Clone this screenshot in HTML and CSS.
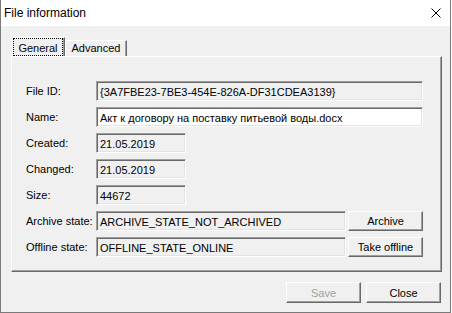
FILE: index.html
```html
<!DOCTYPE html>
<html lang="en">
<head>
    <meta charset="UTF-8">
    <title>File information</title>
    <link rel="stylesheet" href="styles.css">
</head>
<body>
    <div class="window">
        <div class="titlebar">
            <span class="title">File information</span>
            <svg class="close-icon" width="10" height="10" viewBox="0 0 10 10">
                <path d="M0.5 0.5 L9.5 9.5 M9.5 0.5 L0.5 9.5" stroke="#000" stroke-width="1" fill="none"/>
            </svg>
        </div>
        <div class="client">
            <div class="tabs">
                <div class="tab active"><span class="focus">General</span></div>
                <div class="tab">Advanced</div>
            </div>
            <div class="panel">
                <div class="form">
                    <label>File ID:</label>
                    <div class="field wide">{3A7FBE23-7BE3-454E-826A-DF31CDEA3139}</div>

                    <label>Name:</label>
                    <div class="field wide editable">Акт к договору на поставку питьевой воды.docx</div>

                    <label>Created:</label>
                    <div class="field short">21.05.2019</div>

                    <label>Changed:</label>
                    <div class="field short">21.05.2019</div>

                    <label>Size:</label>
                    <div class="field short">44672</div>

                    <label>Archive state:</label>
                    <div class="field-row">
                        <div class="field state">ARCHIVE_STATE_NOT_ARCHIVED</div>
                        <button class="btn small">Archive</button>
                    </div>

                    <label>Offline state:</label>
                    <div class="field-row">
                        <div class="field state">OFFLINE_STATE_ONLINE</div>
                        <button class="btn small">Take offline</button>
                    </div>
                </div>
            </div>
            <div class="actions">
                <button class="btn" disabled>Save</button>
                <button class="btn">Close</button>
            </div>
        </div>
    </div>
</body>
</html>
```

FILE: styles.css
```css
* {
    margin: 0;
    padding: 0;
    box-sizing: border-box;
}
body {
    background: #fff;
    font-family: 'Liberation Sans', Arial, sans-serif;
    font-size: 11px;
    color: #000;
}
.window {
    width: 451px;
    height: 313px;
    border: 1px solid #7a7a7a;
    border-top: none;
    display: flex;
    flex-direction: column;
}
.titlebar {
    height: 26px;
    background: #fff;
    display: flex;
    align-items: center;
    justify-content: space-between;
    padding: 0 9px 1px 3px;
}
.title {
    font-size: 12px;
}
.client {
    flex: 1;
    background: #f0f0f0;
    padding-top: 11px;
}
.tabs {
    display: flex;
    align-items: flex-end;
    padding-left: 11px;
    height: 19px;
}
.tab {
    height: 16px;
    width: 62px;
    border-top: 1px solid #fff;
    border-left: 1px solid #fff;
    border-right: 1px solid #696969;
    box-shadow: inset -1px 0 #a0a0a0;
    display: flex;
    align-items: center;
    justify-content: center;
    padding-bottom: 1px;
}
.tab.active {
    height: 19px;
    width: 53px;
    padding: 0 1px 0 0;
}
.focus {
    display: flex;
    align-items: center;
    justify-content: center;
    width: 100%;
    height: 100%;
    border: 1px dotted #000;
    padding-top: 1px;
}
.panel {
    margin-left: 10px;
    width: 431px;
    height: 216px;
    border-top: 1px solid #fff;
    border-left: 1px solid #fff;
    border-right: 1px solid #696969;
    border-bottom: 1px solid #696969;
    box-shadow: inset -1px -1px #a0a0a0;
    padding: 24px 0 0 14px;
}
.form {
    display: grid;
    grid-template-columns: 70px auto;
    row-gap: 6px;
    align-items: center;
}
.form label {
    line-height: 20px;
}
.field {
    height: 20px;
    line-height: 16px;
    padding: 2px 3px 0;
    white-space: nowrap;
    overflow: hidden;
    background: #f0f0f0;
    border: 1px solid;
    border-color: #a0a0a0 #fff #fff #a0a0a0;
    box-shadow: inset 1px 1px #696969, inset -1px -1px #e3e3e3;
}
.field.editable {
    background: #fff;
}
.field.wide {
    width: 327px;
}
.field.short {
    width: 90px;
}
.field.state {
    width: 250px;
}
.field-row {
    display: flex;
    gap: 2px;
}
.btn {
    width: 75px;
    height: 21px;
    font-family: 'Liberation Sans', Arial, sans-serif;
    font-size: 11px;
    color: #000;
    background: #f0f0f0;
    border: 1px solid;
    border-color: #fff #696969 #696969 #fff;
    box-shadow: inset -1px -1px #a0a0a0;
}
.btn.small {
    height: 20px;
}
.btn:disabled {
    color: #a0a0a0;
}
.actions {
    display: flex;
    justify-content: flex-end;
    gap: 5px;
    margin-top: 10px;
    padding-right: 9px;
}
```
